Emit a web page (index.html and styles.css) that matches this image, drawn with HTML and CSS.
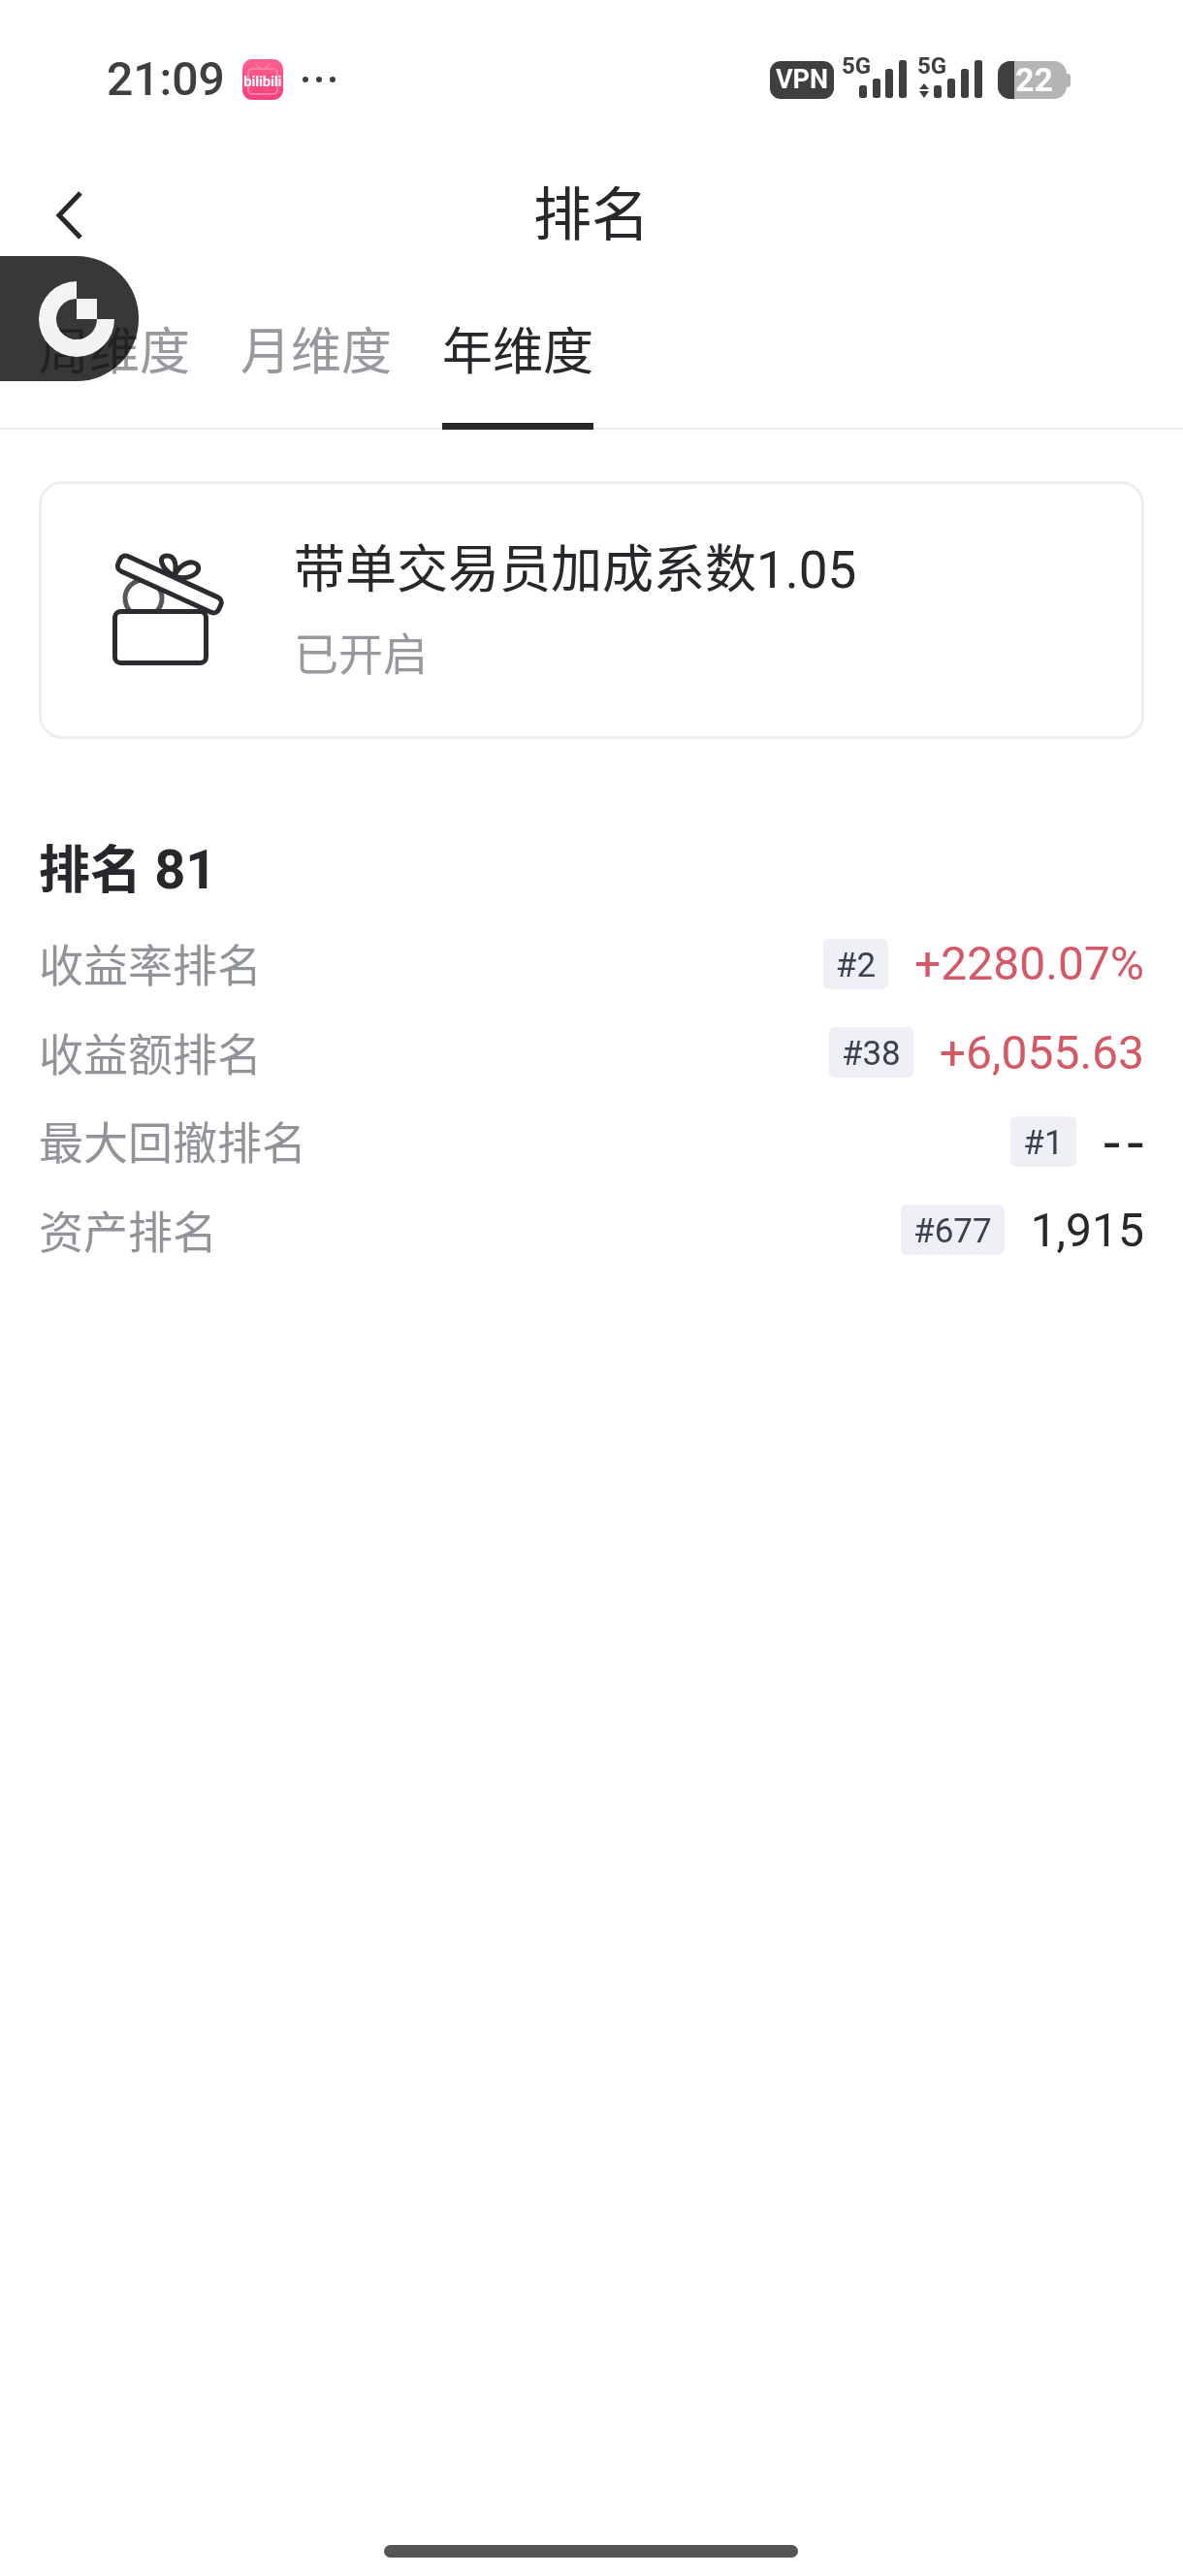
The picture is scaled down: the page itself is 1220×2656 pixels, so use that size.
FILE: index.html
```html
<!DOCTYPE html>
<html lang="zh-CN">
<head>
    <meta charset="UTF-8">
    <title>排名</title>
    <link rel="stylesheet" href="styles.css">
</head>
<body>
    <div class="page">
        <div class="status">
            <div class="status-left">
                <span class="time">21:09</span>
                <span class="app-icon">
                    <svg class="app-tv" width="42" height="42" viewBox="0 0 42 42">
                        <path d="M14 5l4 5M28 5l-4 5" stroke="#fa7ea3" stroke-width="2" fill="none"/>
                        <rect x="6" y="10" width="30" height="26" rx="4" fill="none" stroke="#fa7ea3" stroke-width="2"/>
                    </svg>
                    <span class="app-name">bilibili</span>
                </span>
                <span class="dots"><i></i><i></i><i></i></span>
            </div>
            <div class="status-right">
                <span class="vpn">VPN</span>
                <span class="net">
                    <span class="net-name">5G</span>
                    <svg width="50" height="40" viewBox="0 0 50 40">
                        <rect x="1" y="26" width="8" height="13" rx="2.500"/>
                        <rect x="15" y="19" width="8" height="20" rx="2.500"/>
                        <rect x="28" y="9" width="8" height="30" rx="2.500"/>
                        <rect x="42" y="0" width="8" height="39" rx="2.500"/>
                    </svg>
                </span>
                <span class="net net-data">
                    <span class="net-name">5G</span>
                    <svg width="67" height="40" viewBox="0 0 67 40">
                        <path d="M7 24l5 6H2zM7 39l5-7H2z"/>
                        <rect x="17" y="26" width="8" height="13" rx="2.500"/>
                        <rect x="31" y="19" width="8" height="20" rx="2.500"/>
                        <rect x="45" y="9" width="8" height="30" rx="2.500"/>
                        <rect x="59" y="0" width="8" height="39" rx="2.500"/>
                    </svg>
                </span>
                <span class="battery">
                    <span class="battery-body">
                        <span class="battery-level"></span>
                        <span class="battery-num">22</span>
                    </span>
                    <span class="battery-cap"></span>
                </span>
            </div>
        </div>

        <div class="topbar">
            <svg class="back" width="32" height="52" viewBox="0 0 32 52">
                <path d="M28 3L6 26l22 23" fill="none" stroke="#26282c" stroke-width="5"/>
            </svg>
            <h1>排名</h1>
        </div>

        <div class="tabs">
            <a class="tab">周维度</a>
            <a class="tab">月维度</a>
            <a class="tab active">年维度</a>
        </div>

        <div class="float-btn"></div>
        <svg class="float-logo" width="84" height="84" viewBox="0 0 84 84">
            <path d="M39 3A39 39 0 1 0 78 42H60A21 21 0 1 1 39 21Z" fill="#fff"/>
            <rect x="39" y="21" width="21" height="21" fill="#fff"/>
        </svg>

        <div class="card">
            <svg class="gift" width="125" height="125" viewBox="0 0 125 125" fill="none" stroke="#2a2c30" stroke-width="5">
                <circle cx="38" cy="53" r="19" stroke="#55575a"/>
                <rect x="8.500" y="66.500" width="94" height="53" rx="6" fill="#fff"/>
                <path d="M70 30C56 23 52 9 62 9C72 9 72 21 70 30C76 15 90 13 94 19C98 27 84 35 70 30Z"/>
                <rect x="8" y="30" width="114" height="17" rx="6" transform="rotate(24.500 65 38)" fill="#fff"/>
            </svg>
            <div class="card-text">
                <div class="card-title">带单交易员加成系数1.05</div>
                <div class="card-sub">已开启</div>
            </div>
        </div>

        <div class="rank">
            <h2>排名 <span class="rank-num">81</span></h2>
            <div class="row">
                <span class="label">收益率排名</span>
                <span class="tag">#2</span>
                <span class="value up">+2280.07%</span>
            </div>
            <div class="row">
                <span class="label">收益额排名</span>
                <span class="tag">#38</span>
                <span class="value up">+6,055.63</span>
            </div>
            <div class="row">
                <span class="label">最大回撤排名</span>
                <span class="tag">#1</span>
                <span class="value dash">--</span>
            </div>
            <div class="row">
                <span class="label">资产排名</span>
                <span class="tag">#677</span>
                <span class="value">1,915</span>
            </div>
        </div>

        <div class="home-bar"></div>
    </div>
</body>
</html>
```

FILE: styles.css
```css
* {
    margin: 0;
    padding: 0;
    box-sizing: border-box;
}
body {
    background: #fff;
    font-family: Roboto, "Noto Sans CJK SC", sans-serif;
    color: #26282c;
}
.page {
    position: relative;
    width: 1220px;
    height: 2656px;
    display: flex;
    flex-direction: column;
    overflow: hidden;
}

/* status bar */
.status {
    height: 164px;
    padding: 60px 116px 0 110px;
    display: flex;
    justify-content: space-between;
    align-items: flex-start;
}
.status-left {
    display: flex;
    align-items: center;
    height: 44px;
}
.time {
    font-size: 48px;
    font-weight: 500;
    color: #3f3f3f;
    line-height: 44px;
}
.app-icon {
    position: relative;
    width: 42px;
    height: 42px;
    margin-left: 18px;
    border-radius: 10px;
    background: linear-gradient(#f9608f, #f8407c);
    display: flex;
    align-items: center;
    justify-content: center;
}
.app-tv {
    position: absolute;
    left: 0;
    top: 0;
}
.app-name {
    position: relative;
    font-size: 15px;
    font-weight: 700;
    color: #fff;
    letter-spacing: -0.2px;
    padding-top: 3px;
}
.dots {
    display: flex;
    gap: 8px;
    margin-left: 20px;
}
.dots i {
    width: 6px;
    height: 6px;
    border-radius: 50%;
    background: #3f3f3f;
}
.status-right {
    display: flex;
    align-items: flex-end;
    height: 44px;
    margin-top: -2px;
    fill: #3f3f3f;
}
.vpn {
    width: 66px;
    height: 39px;
    border-radius: 11px;
    background: #3f3f3f;
    color: #fff;
    font: 700 27px/39px Roboto, sans-serif;
    text-align: center;
}
.net {
    position: relative;
    width: 67px;
    height: 40px;
    margin-left: 8px;
    display: flex;
    justify-content: flex-end;
}
.net-data {
    margin-left: 11px;
}
.net-name {
    position: absolute;
    left: 0;
    top: -6px;
    font: 700 24px/24px Roboto, sans-serif;
    color: #3f3f3f;
}
.battery {
    display: flex;
    align-items: center;
    margin-left: 16px;
}
.battery-body {
    position: relative;
    width: 71px;
    height: 39px;
    border-radius: 13px;
    background: #b5b5b5;
    overflow: hidden;
    display: block;
}
.battery-level {
    position: absolute;
    left: 0;
    top: 0;
    width: 17px;
    height: 39px;
    background: #3f3f3f;
}
.battery-num {
    position: absolute;
    left: 18px;
    top: 0;
    font: 700 34px/39px Roboto, sans-serif;
    color: #fff;
}
.battery-cap {
    width: 4px;
    height: 14px;
    border-radius: 0 3px 3px 0;
    background: #b5b5b5;
}

/* title */
.topbar {
    position: relative;
    height: 112px;
    display: flex;
    align-items: center;
    justify-content: center;
}
.topbar h1 {
    font-size: 60px;
    font-weight: 400;
    line-height: 112px;
    padding-top: 6px;
}
.back {
    position: absolute;
    left: 55px;
    top: 32px;
}

/* tabs */
.tabs {
    height: 167px;
    padding: 0 40px;
    display: flex;
    gap: 52px;
    border-bottom: 2px solid #eeeeee;
}
.tab {
    width: 156px;
    height: 167px;
    padding-top: 51px;
    font-size: 52px;
    line-height: 74px;
    text-align: center;
    color: #96999d;
}
.tab.active {
    color: #26282c;
    border-bottom: 7px solid #26282c;
}

/* floating button, the tab text shows through it */
.float-btn {
    position: absolute;
    left: 0;
    top: 264px;
    width: 143px;
    height: 129px;
    border-radius: 0 64px 64px 0;
    background: #383838;
    mix-blend-mode: multiply;
}
.float-logo {
    position: absolute;
    left: 40px;
    top: 287px;
    opacity: 0.94;
}

/* card */
.card {
    margin: 53px 40px 0;
    height: 266px;
    border: 3px solid #eeeeee;
    border-radius: 24px;
    display: flex;
    align-items: center;
    padding-left: 67px;
}
.gift {
    margin-bottom: 5px;
}
.card-text {
    margin-left: 68px;
}
.card-title {
    font-size: 53px;
    line-height: 64px;
}
.card-sub {
    margin-top: 27px;
    font-size: 46px;
    line-height: 56px;
    color: #96999d;
}

/* rank */
.rank {
    padding: 0 40px;
    margin-top: 100px;
}
.rank h2 {
    font-size: 53px;
    font-weight: 700;
    line-height: 70px;
    margin-bottom: 15px;
}
.rank-num {
    font-size: 56px;
}
.row {
    height: 91.5px;
    display: flex;
    align-items: center;
}
.label {
    flex: 1;
    font-size: 46px;
    color: #909398;
    padding-bottom: 3px;
}
.tag {
    height: 52px;
    padding: 2px 13px 0;
    border-radius: 6px;
    background: #eef0f6;
    font-size: 35px;
    line-height: 52px;
    color: #3a4150;
}
.value {
    margin-left: 27px;
    font-size: 48px;
    color: #26282c;
}
.value.up {
    color: #d45866;
}
.value.dash {
    font-family: "DejaVu Sans", sans-serif;
    font-size: 56px;
    line-height: 52px;
    letter-spacing: 4px;
    margin-right: -5px;
}

.home-bar {
    position: absolute;
    left: 396px;
    top: 2624px;
    width: 427px;
    height: 13px;
    border-radius: 7px;
    background: #555555;
}
```
